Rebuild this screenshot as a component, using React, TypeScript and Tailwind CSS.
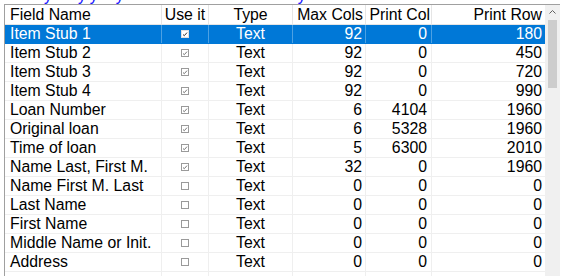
import React from "react";

type Row = {
  name: string;
  use: boolean;
  type: string;
  maxCols: number;
  printCol: number;
  printRow: number;
};

const rows: Row[] = [
  { name: "Item Stub 1", use: true, type: "Text", maxCols: 92, printCol: 0, printRow: 180 },
  { name: "Item Stub 2", use: true, type: "Text", maxCols: 92, printCol: 0, printRow: 450 },
  { name: "Item Stub 3", use: true, type: "Text", maxCols: 92, printCol: 0, printRow: 720 },
  { name: "Item Stub 4", use: true, type: "Text", maxCols: 92, printCol: 0, printRow: 990 },
  { name: "Loan Number", use: true, type: "Text", maxCols: 6, printCol: 4104, printRow: 1960 },
  { name: "Original loan", use: true, type: "Text", maxCols: 6, printCol: 5328, printRow: 1960 },
  { name: "Time of loan", use: true, type: "Text", maxCols: 5, printCol: 6300, printRow: 2010 },
  { name: "Name Last, First M.", use: true, type: "Text", maxCols: 32, printCol: 0, printRow: 1960 },
  { name: "Name First M. Last", use: false, type: "Text", maxCols: 0, printCol: 0, printRow: 0 },
  { name: "Last Name", use: false, type: "Text", maxCols: 0, printCol: 0, printRow: 0 },
  { name: "First Name", use: false, type: "Text", maxCols: 0, printCol: 0, printRow: 0 },
  { name: "Middle Name or Init.", use: false, type: "Text", maxCols: 0, printCol: 0, printRow: 0 },
  { name: "Address", use: false, type: "Text", maxCols: 0, printCol: 0, printRow: 0 },
];

const cols = "grid grid-cols-[157px_47px_84px_73px_66px_113px]";

const Check = ({ checked, selected }: { checked: boolean; selected: boolean }) => (
  <svg width="8" height="8" viewBox="0 0 8 8">
    <rect x="0.5" y="0.5" width="7" height="7" fill="#ffffff" stroke={selected ? "#e0e0e0" : "#9a9a9a"} />
    {checked && (
      <path d="M2 4.5 L3.3 5.7 L6 2.6" fill="none" stroke={selected ? "#333" : "#777"} strokeWidth="1" />
    )}
  </svg>
);

export default function App() {
  return (
    <div
      className="w-[563px] h-[276px] overflow-hidden bg-white text-[15.8px] text-black"
      style={{ fontFamily: '"Liberation Sans", Arial, sans-serif' }}
    >
      <div className="h-[4px] overflow-hidden text-[#1a1aff] leading-none whitespace-nowrap">
        <div className="-mt-[12px] flex">
          <span className="ml-[44px]">y</span>
          <span className="ml-[26px]">y</span>
          <span className="ml-[4px]">y</span>
          <span className="ml-[18px]">y</span>
          <span className="ml-[174px]">y</span>
        </div>
      </div>
      <div className="flex ml-[4px]">
        <div className="border-l border-t border-[#a0a0a0]">
          <div className={`${cols} h-[20px] leading-[20px] border-b border-[#e5e5e5]`}>
            <div className="pl-[5px] border-r border-[#e5e5e5]">Field Name</div>
            <div className="text-center border-r border-[#e5e5e5]">Use it</div>
            <div className="text-center border-r border-[#e5e5e5]">Type</div>
            <div className="text-right pr-[2px] border-r border-[#e5e5e5] whitespace-nowrap">Max Cols</div>
            <div className="text-right pr-[1px] border-r border-[#e5e5e5] whitespace-nowrap">Print Col</div>
            <div className="text-right pr-[3px]">Print Row</div>
          </div>
          {rows.map((r, i) => {
            const sel = i === 0;
            const line = sel ? "border-[#4da1e3]" : "border-[#efefef]";
            return (
              <div
                key={r.name}
                className={`${cols} h-[19px] leading-[18px] border-b ${
                  sel ? "bg-[#0078d7] text-white border-[#0078d7]" : "border-[#efefef]"
                }`}
              >
                <div className={`pl-[5px] border-r ${line} whitespace-nowrap`}>{r.name}</div>
                <div className={`flex items-center justify-center border-r ${line}`}>
                  <Check checked={r.use} selected={sel} />
                </div>
                <div className={`text-center border-r ${line}`}>{r.type}</div>
                <div className={`text-right pr-[3px] border-r ${line}`}>{r.maxCols}</div>
                <div className={`text-right pr-[4px] border-r ${line}`}>{r.printCol}</div>
                <div className="text-right pr-[3px]">{r.printRow}</div>
              </div>
            );
          })}
          <div className={`${cols} h-[19px]`}>
            <div className="border-r border-[#efefef]" />
            <div className="border-r border-[#efefef]" />
            <div className="border-r border-[#efefef]" />
            <div className="border-r border-[#efefef]" />
            <div className="border-r border-[#efefef]" />
            <div />
          </div>
        </div>
        <div className="w-[15px] h-[272px] border-t border-[#a0a0a0] bg-[#f0f0f0] flex flex-col items-center">
          <svg width="15" height="15" viewBox="0 0 15 15" className="shrink-0">
            <path d="M4.5 8.5 L7.5 5.5 L10.5 8.5" fill="none" stroke="#606060" strokeWidth="1" />
          </svg>
          <div className="w-[9px] h-[68px] bg-[#cdcdcd]" />
        </div>
      </div>
    </div>
  );
}
